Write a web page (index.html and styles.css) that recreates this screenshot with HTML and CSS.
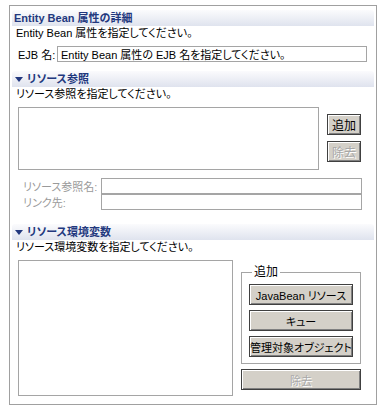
FILE: index.html
```html
<!DOCTYPE html>
<html lang="ja">
<head>
  <meta charset="UTF-8">
  <title>Entity Bean</title>
  <link rel="stylesheet" href="styles.css">
</head>
<body>
  <div class="panel">
    <div class="section-head">Entity Bean 属性の詳細</div>
    <div class="desc">Entity Bean 属性を指定してください。</div>
    <div class="ejb-row">
      <label class="ejb-label">EJB 名:</label>
      <input class="text ejb-input" type="text" value="Entity Bean 属性の EJB 名を指定してください。">
    </div>

    <div class="section-head gap-2"><span class="twisty"></span>リソース参照</div>
    <div class="desc">リソース参照を指定してください。</div>
    <div class="ref-row">
      <div class="list ref-list"></div>
      <div class="ref-buttons">
        <button class="btn small">追加</button>
        <button class="btn small" disabled>除去</button>
      </div>
    </div>
    <div class="field-row first">
      <span class="field-label">リソース参照名:</span>
      <input class="text field-input" type="text" disabled>
    </div>
    <div class="field-row">
      <span class="field-label">リンク先:</span>
      <input class="text field-input" type="text" disabled>
    </div>

    <div class="section-head gap-3"><span class="twisty"></span>リソース環境変数</div>
    <div class="desc">リソース環境変数を指定してください。</div>
    <div class="env-row">
      <div class="list env-list"></div>
      <div class="env-side">
        <fieldset class="group">
          <legend>追加</legend>
          <button class="btn wide">JavaBean リソース</button>
          <button class="btn wide">キュー</button>
          <button class="btn wide">管理対象オブジェクト</button>
        </fieldset>
        <button class="btn remove" disabled>除去</button>
      </div>
    </div>
  </div>
</body>
</html>
```

FILE: styles.css
```css
body {
  margin: 0;
  background-color: #fff;
  color: #000;
  font-family: Tahoma, "Liberation Sans", "Noto Sans CJK JP", sans-serif;
  font-size: 11px;
  font-feature-settings: "palt";
}
.panel {
  margin: 5px 0 0 9px;
  width: 366px;
  height: 398px;
  border: 1px solid #a0a0a0;
}
.section-head {
  margin: 4px 2px 0 2px;
  height: 16px;
  padding-left: 2px;
  border-radius: 3px 3px 0 0;
  background: linear-gradient(#fbfbfd, #dfe3ee);
  color: #22387e;
  font-weight: bold;
  line-height: 16px;
  display: flex;
  align-items: center;
}
.gap-2 {
  margin-top: 9px;
}
.gap-3 {
  margin-top: 14px;
}
.twisty {
  width: 0;
  height: 0;
  margin: 0 4px 0 1px;
  border-left: 4px solid transparent;
  border-right: 4px solid transparent;
  border-top: 5px solid #22387e;
}
.desc {
  margin-left: 6px;
  height: 14px;
  line-height: 14px;
}
.text {
  box-sizing: border-box;
  margin: 0;
  padding: 0 3px;
  border: 1px solid #a5a5a5;
  background: #fff;
  font: inherit;
  color: #000;
}
.ejb-row {
  display: flex;
  align-items: center;
  margin-top: 6px;
  padding-left: 8px;
}
.ejb-label {
  width: 39px;
}
.ejb-input {
  width: 310px;
  height: 16px;
}
.list {
  box-sizing: border-box;
  border: 1px solid #a5a5a5;
  background: #fff;
}
.ref-row {
  display: flex;
  margin-top: 6px;
  padding-left: 8px;
}
.ref-list {
  width: 301px;
  height: 63px;
}
.ref-buttons {
  display: flex;
  flex-direction: column;
  gap: 6px;
  margin-left: 8px;
  padding-top: 7px;
}
.btn {
  box-sizing: border-box;
  margin: 0;
  padding: 0;
  height: 21px;
  border: 1px solid #404040;
  background: #d4d0c8;
  box-shadow: inset 1px 1px #fff, inset -1px -1px #808080;
  font: inherit;
  color: #000;
}
.btn:disabled {
  color: #a8a8a8;
  text-shadow: 1px 1px #fff;
}
.small {
  width: 34px;
  font-size: 12px;
}
.field-row {
  display: flex;
  align-items: center;
  padding-left: 13px;
  color: #9a9a9a;
}
.field-row.first {
  margin-top: 8px;
}
.field-label {
  width: 78px;
}
.field-input {
  width: 261px;
  height: 16px;
}
.env-row {
  display: flex;
  margin-top: 6px;
  padding-left: 8px;
}
.env-list {
  width: 215px;
  height: 136px;
}
.env-side {
  margin-left: 8px;
  padding-top: 5px;
  width: 120px;
}
.group {
  box-sizing: border-box;
  margin: 0;
  width: 120px;
  padding: 5px 7px 6px 7px;
  min-width: 0;
  border: 1px solid #a5a5a5;
  display: flex;
  flex-direction: column;
  gap: 5px;
}
.group legend {
  padding: 0 2px;
  margin-left: 3px;
  line-height: 14px;
  font-size: 12px;
}
.wide {
  width: 104px;
}
.remove {
  display: block;
  margin-top: 5px;
  width: 120px;
}
```
